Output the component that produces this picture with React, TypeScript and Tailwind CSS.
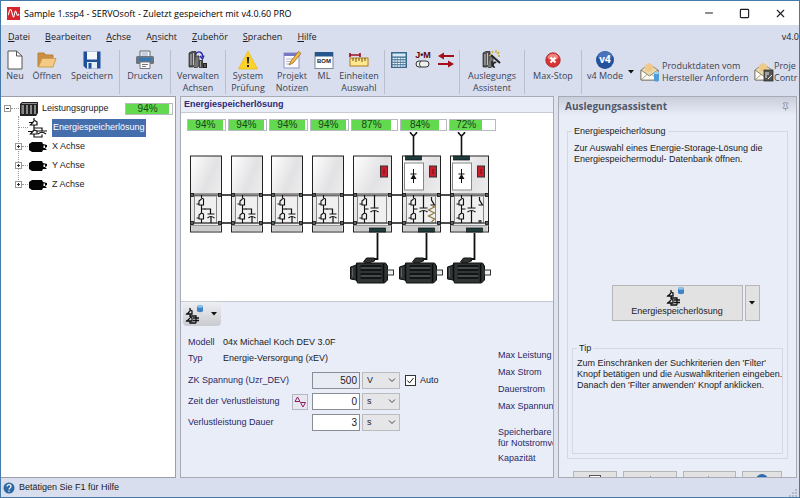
import type { ReactNode } from "react";
import clsx from "clsx";
import { Minus, Pin, Square, X } from "lucide-react";

const menu = [
  { key: "D", before: "", after: "atei" },
  { key: "B", before: "", after: "earbeiten" },
  { key: "A", before: "", after: "chse" },
  { key: "n", before: "A", after: "sicht" },
  { key: "Z", before: "", after: "ubehör" },
  { key: "S", before: "", after: "prachen" },
  { key: "H", before: "", after: "ilfe" },
];

const loads = [
  { value: 94, wide: false },
  { value: 94, wide: false },
  { value: 94, wide: false },
  { value: 94, wide: false },
  { value: 87, wide: true },
  { value: 84, wide: true },
  { value: 72, wide: true },
];

function LogoIcon() {
  return (
    <svg viewBox="0 0 13 13" className="size-[13px] shrink-0">
      <rect width="13" height="13" fill="#d8242c" />
      <path d="M1 8C2 8 2 2.5 3.5 2.5S5.5 10 6.5 10 7.5 4 8.5 4 9.5 8.5 10.5 8.5 11.5 7.5 12 7" fill="none" stroke="#fff" strokeWidth="1.1" />
    </svg>
  );
}

function NewIcon() {
  return (
    <svg viewBox="0 0 20 20" className="size-5">
      <path d="M3 1H11.5L17 6V19H3Z" fill="#fff" stroke="#555" />
      <path d="M11.5 1V6H17" fill="none" stroke="#555" />
    </svg>
  );
}

function OpenIcon() {
  return (
    <svg viewBox="0 0 20 20" className="size-5">
      <path d="M1 17V3H7L9 5H16V9" fill="#c98f45" stroke="#b98239" />
      <path d="M1.5 17L5 8.5H19L16 17Z" fill="#f3cb85" stroke="#cf9c52" />
    </svg>
  );
}

function SaveIcon() {
  return (
    <svg viewBox="0 0 20 20" className="size-5">
      <path d="M1.5 1.5H18.5V18.5H4L1.5 16Z" fill="#21509a" />
      <rect x="5" y="1.5" width="10" height="8" fill="#f4f7fc" />
      <rect x="5" y="12" width="10" height="6.5" fill="#e7edf8" />
      <rect x="6.5" y="13" width="3" height="5.5" fill="#21509a" />
    </svg>
  );
}

function PrintIcon() {
  return (
    <svg viewBox="0 0 20 20" className="size-5">
      <path d="M5 1H15V7H5Z" fill="#fff" stroke="#666" />
      <path d="M6.5 3H13M6.5 5H13" stroke="#8aa3c4" />
      <rect x="1" y="6" width="18" height="8" rx="1.5" fill="#687585" />
      <rect x="4" y="8" width="12" height="3" fill="#3576b5" />
      <path d="M5 12H15V18.5H5Z" fill="#fff" stroke="#777" />
      <path d="M7 14.5H13M7 16.5H11" stroke="#777" />
    </svg>
  );
}

function CabinetGlyph() {
  return (
    <>
      <path d="M1 3L4 1.5H8V15L5 17H1Z" fill="#555" stroke="#222" strokeWidth=".7" />
      <path d="M3 4V15M5.5 3V15" stroke="#ddd" strokeWidth=".8" />
      <path d="M8 6H11V16L9 17.5H6" fill="#777" stroke="#222" strokeWidth=".7" />
    </>
  );
}

function AxesIcon() {
  return (
    <svg viewBox="0 0 20 20" className="size-5">
      <CabinetGlyph />
      <rect x="11" y="10" width="4" height="8" fill="#444" />
      <rect x="15" y="13" width="4" height="5" fill="#222" />
      <path d="M12.5 11V17M17 14V17" stroke="#bbb" strokeWidth=".7" />
      <path d="M8 4C10 0 15 2 14.5 7M12 6L14.5 9L16 5.5" fill="none" stroke="#2425a8" strokeWidth="1.3" />
    </svg>
  );
}

function WarningIcon() {
  return (
    <svg viewBox="0 0 20 20" className="size-5">
      <path d="M10 1L19.5 19H.5Z" fill="#fbd32b" stroke="#e8b80c" strokeWidth=".7" />
      <path d="M8.8 7H11.2L10.7 13.5H9.3ZM9 15H11V17H9Z" fill="#222" />
    </svg>
  );
}

function NotesIcon() {
  return (
    <svg viewBox="0 0 20 20" className="size-5">
      <rect x="2" y="3" width="15" height="15" fill="#fafaff" stroke="#8f92c9" />
      <rect x="2" y="3" width="15" height="3" fill="#7679c4" />
      <path d="M4 9H11M4 11.5H9M4 14H8" stroke="#bbb" />
      <path d="M7 15L9 11L16.5 1.5L19 3.5L11 13Z" fill="#f0bb47" stroke="#9b6623" strokeWidth=".8" />
    </svg>
  );
}

function BomIcon() {
  return (
    <svg viewBox="0 0 20 20" className="size-5">
      <rect x="1" y="2.5" width="18" height="16" fill="#fff" stroke="#7d8798" />
      <rect x="1" y="2" width="18" height="4.5" fill="#27568f" />
      <text x="10" y="13" textAnchor="middle" fontSize="6" fontWeight="bold" fill="#222" fontFamily="Liberation Sans, sans-serif">BOM</text>
    </svg>
  );
}

function UnitsIcon() {
  return (
    <svg viewBox="0 0 20 20" className="size-5">
      <path d="M1 5H11M1 3V7M11 3V7" stroke="#9c1226" strokeWidth="1.7" />
      <rect x="1" y="8" width="18" height="8" fill="#ffe88d" stroke="#ab7c22" />
      <path d="M4 8V11M7 8V12M10 8V11M13 8V12M16 8V11" stroke="#6a4b10" />
    </svg>
  );
}

function CalculatorIcon() {
  return (
    <svg viewBox="0 0 18 18" className="size-[18px]">
      <rect x="1" y="1" width="16" height="16" fill="#39688f" />
      <rect x="2.5" y="2.5" width="13" height="3" fill="#d6e9f5" />
      {[7.5, 10, 12.5, 15].map((y) => (
        <path key={y} d={`M2.5 ${y}H15.5`} stroke="#e9f3fa" strokeWidth="1.5" strokeDasharray="2.2 .5" />
      ))}
    </svg>
  );
}

function MotorInertiaIcon() {
  return (
    <svg viewBox="0 0 20 20" className="size-5">
      <text x="10" y="8" textAnchor="middle" fontSize="9" fontWeight="bold" fill="#5c0712" fontFamily="Liberation Sans, sans-serif">J•M</text>
      <rect x="3" y="11" width="13" height="6" rx="3" fill="#eee" stroke="#333" />
      <path d="M8 11C6 13 6 15 8 17" fill="none" stroke="#333" />
    </svg>
  );
}

function ArrowsIcon() {
  return (
    <svg viewBox="0 0 18 18" className="size-[18px]">
      <path d="M5 5H17M1 13H13" stroke="#a50f1c" strokeWidth="1.8" />
      <path d="M1 5L7 1.5V8.5ZM17 13L11 9.5V16.5Z" fill="#a50f1c" />
    </svg>
  );
}

function WizardIcon() {
  return (
    <svg viewBox="0 0 20 20" className="size-5">
      <CabinetGlyph />
      <path d="M10 16V11M13 17C9 18 12 10 14 13" fill="none" stroke="#222" strokeWidth="1.5" />
      <path d="M9 5L18 13" stroke="#222" strokeWidth="2" />
      <path d="M10 1L11 3M14 0V3M17 2L15.5 4M18 6H16M7 6L9 5" stroke="#cda928" strokeWidth="1.3" />
    </svg>
  );
}

function StopIcon() {
  return (
    <svg viewBox="0 0 16 16" className="size-4">
      <circle cx="8" cy="8" r="7.2" fill="#d93434" stroke="#a51d1d" strokeWidth=".8" />
      <ellipse cx="8" cy="5" rx="5.3" ry="3.3" fill="#ee8580" />
      <path d="M5.5 5.5L10.5 10.5M10.5 5.5L5.5 10.5" stroke="#fff" strokeWidth="2" />
    </svg>
  );
}

function V4Icon() {
  return (
    <svg viewBox="0 0 20 20" className="size-5">
      <circle cx="10" cy="10" r="9" fill="#24509e" />
      <ellipse cx="10" cy="6" rx="7" ry="4.5" fill="#4873bb" />
      <text x="10" y="13" textAnchor="middle" fontSize="10" fontWeight="bold" fill="#fff" fontFamily="Open Sans, sans-serif">v4</text>
    </svg>
  );
}

function MailIcon({ device }: { device?: boolean }) {
  return (
    <svg viewBox="0 0 20 20" className="size-5 shrink-0">
      <path d="M1 8L9 2L18 8V18H1Z" fill="#ead9aa" stroke="#82745b" strokeWidth=".8" />
      <circle cx="9" cy="5.5" r="4.2" fill="#efc98c" />
      <path d="M1 8L9.5 14L18 8V18H1Z" fill="#fffdf1" stroke="#6f6b62" strokeWidth=".8" />
      <path d="M1 18L7 12.5M18 18L12 12.5" stroke="#8f8979" strokeWidth=".8" />
      {device ? (
        <>
          <rect x="10" y="8" width="9" height="11" fill="#555" stroke="#222" strokeWidth=".7" />
          <path d="M12 10V16M14 10V13M14 17L18 13" stroke="#eee" />
        </>
      ) : (
        <>
          <path d="M14 11V18C14 20 19 20 19 18V11Z" fill="#4d9cd6" />
          <ellipse cx="16.5" cy="11" rx="2.5" ry="1.3" fill="#9bd2f3" />
        </>
      )}
    </svg>
  );
}

function DropArrow() {
  return (
    <svg viewBox="0 0 6 4" className="h-1 w-1.5 shrink-0">
      <path d="M0 0H6L3 3.5Z" fill="#111" />
    </svg>
  );
}

function StorageIcon() {
  return (
    <svg viewBox="0 0 20 20" className="size-5 shrink-0">
      <path
        d="M6 0V2L9 4V7H6V10M6 3L2.5 7H6M1 4.5H4M6 10V12L9 13V16H6M6 12L2.5 16H6V19H14V16.5M0 13.5H4M6 10H14V13M9 13H19M10 16Q14 12.5 18 16"
        fill="none"
        stroke="#111"
        strokeWidth="1.2"
      />
    </svg>
  );
}

// smaller storage symbol with the database barrel above it
function StorageDbIcon() {
  return (
    <svg viewBox="0 0 22 20" className="h-5 w-[22px] shrink-0">
      <path
        d="M5 4V6L7 7V10H5V13M5 7L2 10H5M5 13L7 14V17H5M5 14L2 17H5V19H11M1 10H3M1 17H3M5 12H11V19M8 14H14M8 16.5H14"
        fill="none"
        stroke="#111"
        strokeWidth="1.3"
      />
      <path d="M12 2V7C12 8.5 18 8.5 18 7V2Z" fill="#3f83c7" />
      <ellipse cx="15" cy="2.2" rx="3" ry="1.5" fill="#8ec1ea" />
    </svg>
  );
}

function MotorIcon() {
  return (
    <svg viewBox="0 0 20 12" className="h-3 w-5 shrink-0">
      <path d="M1 3L4 1H14L15 3L19 4V6L17 7L19 9L15 9L14 11H4L1 9Z" fill="#050505" />
      <path d="M15.5 4.5H17V7H15.5Z" fill="#fff" />
    </svg>
  );
}

function GroupIcon() {
  return (
    <svg viewBox="0 0 20 16" className="h-4 w-5 shrink-0">
      <path d="M1 3L3 1H19V12L17 15H1Z" fill="#222" />
      <path d="M2.5 4H5V13H2.5ZM7 4H9V13H7ZM11 4H13V13H11ZM15 4H17V13H15Z" fill="#888" />
      <path d="M3 2.5H18" stroke="#aaa" strokeWidth=".8" />
    </svg>
  );
}

function LoadBar({ value, className }: { value: number; className?: string }) {
  return (
    <div className={clsx("h-3 shrink-0 border border-[#b9b9c1] bg-white", className)}>
      <div className="flex h-full items-center bg-[#62d94f]" style={{ width: `${value}%` }}>
        <span className="w-full text-center text-[10px] leading-none text-[#174416]">{value}%</span>
      </div>
    </div>
  );
}

function ToolButton({ icon, lines, className }: { icon: ReactNode; lines?: string[]; className: string }) {
  return (
    <button className={clsx("flex shrink-0 flex-col items-center whitespace-nowrap text-[#3c4254]", className)}>
      <span className="flex h-5 items-center">{icon}</span>
      {lines?.map((line) => (
        <span key={line} className="leading-3">{line}</span>
      ))}
    </button>
  );
}

function Separator() {
  return <div className="h-11 w-px shrink-0 bg-[#b9bfcd]" />;
}

function TreeToggle({ open }: { open?: boolean }) {
  return (
    <button aria-label={open ? "Zuklappen" : "Aufklappen"} className="relative z-10 size-[7px] shrink-0 bg-white">
      <svg viewBox="0 0 7 7" className="size-[7px]">
        <path d={open ? "M2 3.5H5" : "M2 3.5H5M3.5 2V5"} stroke="#333" />
        <rect x=".5" y=".5" width="6" height="6" fill="none" stroke="#999" />
      </svg>
    </button>
  );
}

function Transistors({ x }: { x: number }) {
  return (
    <g transform={`translate(${x} 64)`} fill="none" stroke="#111" strokeWidth="1.1">
      <path d="M5 0V3L7 4V10H5V15M5 4L2.5 6V10H5M0 9H3M5 15V18L7 19V24H5V28M5 18L2.5 20V24H5M0 23H3M5 14H9" />
    </g>
  );
}

function Cabinet({ x, width }: { x: number; width: number }) {
  return (
    <g>
      <rect x={x} y="25" width={width} height="76" fill="url(#metal)" stroke="#222" />
      <rect x={x + 1} y="95" width={width - 2} height="5" fill="#ccc" />
      <path d={`M${x} 62.5H${x + width}M${x} 94.5H${x + width}`} stroke="#999" />
      <rect x={x + 4} y="65" width={width - 9} height="27" fill="#f0f0f0" stroke="#888" />
      {[64, 92].map((y) => (
        <g key={y}>
          <path d={`M${x} ${y}H${x + width}`} stroke="#222" />
          <rect x={x} y={y - 1.5} width="3" height="3" fill="#526565" stroke="#111" strokeWidth=".8" />
          <rect x={x + width - 3} y={y - 1.5} width="3" height="3" fill="#526565" stroke="#111" strokeWidth=".8" />
        </g>
      ))}
      <Transistors x={x + 6} />
    </g>
  );
}

function Motor({ x }: { x: number }) {
  return (
    <g transform={`translate(${x} 127)`}>
      <path d="M29 -25V1H22" fill="none" stroke="#111" strokeWidth="1.8" />
      <path d="M15 4L18 0H26V3L20 5Z" fill="#303333" stroke="#111" />
      <path d="M2 9L8 7V5H37L39 8V22L36 25H9L8 22L2 21Z" fill="#303535" stroke="#111" />
      <path d="M8 6V23M12 8H33M12 12H33M12 16H33M12 20H33M35 6V24" stroke="#090b0b" strokeWidth="1.5" />
      <path d="M13 10H32M13 18H32M4 10V19" stroke="#69706d" strokeWidth=".8" />
      <rect x="39" y="12" width="6" height="5" fill="#eee" stroke="#333" />
    </g>
  );
}

function DriveDiagram() {
  return (
    <svg viewBox="0 0 312 160" className="h-40 w-[312px]" role="img" aria-label="Antriebssystem">
      <defs>
        <linearGradient id="metal" x1="0" y1="0" x2="1" y2="1">
          <stop offset="0" stopColor="#fff" />
          <stop offset=".45" stopColor="#e2e2e4" />
          <stop offset="1" stopColor="#f7f7f7" />
        </linearGradient>
      </defs>
      <path d="M4 64H301M4 92H301" stroke="#111" strokeWidth="1.7" />
      {[3.5, 44.5, 84.5, 125.5].map((x) => (
        <g key={x}>
          <Cabinet x={x} width={31} />
          <path d={`M${x + 14} 78H${x + 20}V83M${x + 17} 83H${x + 24}M${x + 17} 87Q${x + 20} 84 ${x + 24} 87M${x + 20.5} 86V92`} fill="none" stroke="#111" strokeWidth="1.2" />
        </g>
      ))}
      {[166.5, 215.5, 263.5].map((x, i) => (
        <g key={x}>
          <Cabinet x={x} width={38} />
          <path d={`M${x + 21} 64V77M${x + 17} 77H${x + 25}M${x + 17} 81Q${x + 21} 78 ${x + 25} 81M${x + 21} 80V92`} fill="none" stroke="#111" strokeWidth="1.2" />
          <rect x={x + 27} y="35" width="7" height="11" fill="#c91f2c" stroke="#333" />
          <path d={`M${x + 30.5} 38V43`} stroke="#6e0e16" />
          <rect x={x + 16} y="97" width="16" height="4" fill="#203c3c" stroke="#111" strokeWidth=".7" />
          <Motor x={x - 5} />
          {i > 0 && (
            <>
              <rect x={x + 2} y="32" width="19" height="27" fill="#fff" stroke="#888" />
              <rect x={x + 3} y="25" width="16" height="4" fill="#203c3c" stroke="#111" strokeWidth=".7" />
              <path d={`M${x + 11} 25V5M${x + 8} 1V2L${x + 11} 5L${x + 14} 2V1`} fill="none" stroke="#111" strokeWidth="1.6" />
              <path d={`M${x + 11} 38V52M${x + 8} 43H${x + 14}`} stroke="#111" />
              <path d={`M${x + 11} 43L${x + 14} 48H${x + 8}Z`} fill="#111" />
              <path d={`M${x + 29} 66V69L${x + 32} 74H${x + 28}`} fill="none" stroke="#111" strokeWidth="1.2" />
            </>
          )}
          {i === 1 && (
            <path d={`M${x + 29} 74L${x + 32} 76L${x + 26} 79L${x + 32} 82L${x + 26} 85L${x + 32} 88L${x + 29} 91`} fill="none" stroke="#8f7c4d" strokeWidth="1.3" />
          )}
          {i === 2 && <rect x={x + 28} y="89" width="3" height="3" fill="#444" />}
        </g>
      ))}
    </svg>
  );
}

function UnitSelect({ unit, label }: { unit: string; label: string }) {
  return (
    <div className="relative">
      <select aria-label={label} className="block h-[17px] w-[38px] appearance-none border border-[#b9bbbf] bg-[#e6e6e8] pl-1 leading-none text-[#222]">
        <option>{unit}</option>
      </select>
      <svg viewBox="0 0 8 5" className="pointer-events-none absolute right-1 top-1.5 h-[5px] w-2">
        <path d="M1 .5L4 3.5L7 .5" fill="none" stroke="#444" />
      </svg>
    </div>
  );
}

type ValueRowProps = {
  id: string;
  label: string;
  value: string;
  unit: string;
  readOnly?: boolean;
  action?: ReactNode;
  children?: ReactNode;
};

function ValueRow({ id, label, value, unit, readOnly, action, children }: ValueRowProps) {
  return (
    <div className="flex h-[17px] items-center">
      <label htmlFor={id} className="w-[104px] shrink-0 whitespace-nowrap text-[#2a2868]">{label}</label>
      <div className="flex w-5 shrink-0">{action}</div>
      <input
        id={id}
        defaultValue={value}
        readOnly={readOnly}
        className="h-[17px] w-12 border border-[#8a8d94] bg-white px-0.5 text-right text-[10px] read-only:bg-[#e8ebf4]"
      />
      <div className="ml-0.5">
        <UnitSelect unit={unit} label={`Einheit ${label}`} />
      </div>
      {children}
    </div>
  );
}

export default function App() {
  return (
    <div className="flex h-screen flex-col overflow-hidden border border-[#4479aa] bg-[#d8deed] font-['Liberation_Sans',sans-serif] text-[9px] leading-[11px] text-[#1b1b24]">
      <header className="flex h-6 shrink-0 items-center bg-white pl-1.5 font-['Open_Sans',sans-serif]">
        <LogoIcon />
        <h1 className="ml-1 flex-1 text-black">Sample 1.ssp4 - SERVOsoft - Zuletzt gespeichert mit v4.0.60 PRO</h1>
        <div className="flex gap-6 pr-3">
          <button aria-label="Minimieren"><Minus size={12} strokeWidth={2} /></button>
          <button aria-label="Maximieren"><Square size={11} strokeWidth={2.5} /></button>
          <button aria-label="Schließen"><X size={13} strokeWidth={2} /></button>
        </div>
      </header>

      <nav className="flex h-[23px] shrink-0 items-center gap-[15px] overflow-hidden pl-[7px] font-['Open_Sans',sans-serif]">
        {menu.map((item) => (
          <button key={item.key} className="shrink-0">
            {item.before}<span className="underline">{item.key}</span>{item.after}
          </button>
        ))}
        <span className="ml-auto whitespace-nowrap">v4.0</span>
      </nav>

      <div className="flex h-12 shrink-0 overflow-hidden pt-0.5 font-['Open_Sans',sans-serif]">
        <ToolButton icon={<NewIcon />} lines={["Neu"]} className="w-7" />
        <ToolButton icon={<OpenIcon />} lines={["Öffnen"]} className="w-9" />
        <ToolButton icon={<SaveIcon />} lines={["Speichern"]} className="w-[54px]" />
        <Separator />
        <ToolButton icon={<PrintIcon />} lines={["Drucken"]} className="w-[50px]" />
        <Separator />
        <ToolButton icon={<AxesIcon />} lines={["Verwalten", "Achsen"]} className="w-[54px]" />
        <Separator />
        <ToolButton icon={<WarningIcon />} lines={["System", "Prüfung"]} className="w-11" />
        <ToolButton icon={<NotesIcon />} lines={["Projekt", "Notizen"]} className="w-11" />
        <ToolButton icon={<BomIcon />} lines={["ML"]} className="w-5" />
        <ToolButton icon={<UnitsIcon />} lines={["Einheiten", "Auswahl"]} className="w-[50px]" />
        <Separator />
        <ToolButton icon={<CalculatorIcon />} className="w-7" />
        <ToolButton icon={<MotorInertiaIcon />} className="w-5" />
        <ToolButton icon={<ArrowsIcon />} className="w-[26px]" />
        <Separator />
        <ToolButton icon={<WizardIcon />} lines={["Auslegungs", "Assistent"]} className="w-16" />
        <Separator />
        <ToolButton icon={<StopIcon />} lines={["Max-Stop"]} className="w-14" />
        <Separator />
        <ToolButton icon={<V4Icon />} lines={["v4 Mode"]} className="w-[46px]" />
        <button aria-label="Modus wählen" className="flex h-11 w-3 shrink-0 items-center"><DropArrow /></button>
        <button className="flex h-11 w-[114px] shrink-0 items-center gap-0.5 text-left leading-3 text-[#3c4254]">
          <MailIcon />
          <span className="whitespace-nowrap">Produktdaten vom<br />Hersteller Anfordern</span>
        </button>
        <button className="flex h-11 shrink-0 items-center text-left leading-3 text-[#3c4254]">
          <MailIcon device />
          <span className="whitespace-nowrap">Proje<br />Contr</span>
        </button>
      </div>

      <main className="flex min-h-0 flex-1 gap-1 bg-[#dfe3ee]">
        <aside className="relative w-[175px] shrink-0 border border-l-0 border-[#9b9fab] bg-white pt-0.5">
          <div className="absolute left-[17px] top-[19px] h-[70px] border-l border-dotted border-[#999]" />
          <div className="flex h-[19px] items-center pl-[3px]">
            <TreeToggle open />
            <span className="w-2 border-t border-dotted border-[#999]" />
            <GroupIcon />
            <span className="ml-[3px] flex-1">Leistungsgruppe</span>
            <LoadBar value={94} className="mr-0.5 w-12" />
          </div>
          <div className="flex h-[19px] items-center pl-[17px]">
            <span className="w-2.5 border-t border-dotted border-[#999]" />
            <StorageIcon />
            <span className="ml-1 flex h-[18px] items-center bg-[#456ead] px-px text-white">Energiespeicherlösung</span>
          </div>
          {["X Achse", "Y Achse", "Z Achse"].map((axis) => (
            <div key={axis} className="flex h-[19px] items-center pl-3.5">
              <TreeToggle />
              <span className="w-1.5 border-t border-dotted border-[#999]" />
              <MotorIcon />
              <span className="ml-1">{axis}</span>
            </div>
          ))}
        </aside>

        <section className="flex min-w-0 flex-1 flex-col border border-[#a8abb5] bg-[#e9edf7]">
          <h2 className="flex h-[15px] shrink-0 items-center pl-[3px] font-bold text-[#2e2a78]">Energiespeicherlösung</h2>
          <div className="h-[190px] shrink-0 overflow-hidden border-y border-[#c6cad4] bg-white pl-1.5 pt-1.5">
            <div className="flex gap-0.5">
              {loads.map((load, i) => (
                <LoadBar key={i} value={load.value} className={load.wide ? "w-[47px]" : "w-[39px]"} />
              ))}
            </div>
            <DriveDiagram />
          </div>
          <div className="flex min-h-0 flex-1 overflow-hidden">
            <div className="w-[311px] shrink-0 pl-0.5">
              <button aria-label="Energiespeicher wählen" className="flex h-6 w-[38px] items-center gap-1 rounded-b bg-linear-to-b from-[#eeeff3] to-[#c9cbd0] pl-0.5">
                <StorageDbIcon />
                <DropArrow />
              </button>
              <dl className="mt-2 grid grid-cols-[35px_1fr] pl-[5px] leading-4">
                <dt className="text-[#2a2868]">Modell</dt>
                <dd>04x Michael Koch DEV 3.0F</dd>
                <dt className="text-[#2a2868]">Typ</dt>
                <dd>Energie-Versorgung (xEV)</dd>
              </dl>
              <div className="mt-1.5 flex flex-col gap-1 pl-[5px]">
                <ValueRow id="spannung" label="ZK Spannung (Uzr_DEV)" value="500" unit="V" readOnly>
                  <label className="ml-[5px] flex items-center gap-1 whitespace-nowrap">
                    <span className="relative size-[11px]">
                      <input type="checkbox" defaultChecked className="peer block size-[11px] appearance-none border border-[#333] bg-white" />
                      <svg viewBox="0 0 11 11" className="pointer-events-none absolute inset-0 hidden size-[11px] peer-checked:block">
                        <path d="M2.5 5.5L4.5 8L8.5 3" fill="none" stroke="#222" />
                      </svg>
                    </span>
                    Auto
                  </label>
                </ValueRow>
                <ValueRow
                  id="zeit"
                  label="Zeit der Verlustleistung"
                  value="0"
                  unit="s"
                  action={
                    <button aria-label="Verlauf" className="size-4 border border-[#b5b6c4] bg-[#e7e7ed]">
                      <svg viewBox="0 0 14 14" className="size-3.5">
                        <path d="M2 6.5L4.5 2L7 6.5ZM7.5 7.5H12.5L10 12Z" fill="none" stroke="#8b1c68" />
                      </svg>
                    </button>
                  }
                />
                <ValueRow id="dauer" label="Verlustleistung Dauer" value="3" unit="s" />
              </div>
            </div>
            <div className="flex min-w-0 flex-1 flex-col overflow-hidden whitespace-nowrap pl-1.5 pt-[45px] text-[#2a2868]">
              <p className="leading-[17px]">Max Leistung</p>
              <p className="leading-[17px]">Max Strom</p>
              <p className="leading-[17px]">Dauerstrom</p>
              <p className="leading-[17px]">Max Spannun</p>
              <p className="mt-3">Speicherbare<br />für Notstromve</p>
              <p className="mt-1">Kapazität</p>
            </div>
          </div>
        </section>

        <aside className="mr-0.5 flex w-[239px] shrink-0 flex-col overflow-hidden border border-[#a8abb5] bg-[#e9edf7]">
          <div className="flex h-[19px] shrink-0 items-center justify-between bg-linear-to-b from-[#c9cedc] to-[#e9edf7] px-1.5 font-['Open_Sans',sans-serif] text-[10px] text-[#51586c]">
            <h2 className="font-bold">Auslegungsassistent</h2>
            <button aria-label="Anheften"><Pin size={9} color="#7b88a3" /></button>
          </div>
          <fieldset className="mx-2 mt-2.5 min-w-0 shrink-0 border border-[#d3d8e4] px-1 pb-1">
            <legend className="px-0.5">Energiespeicherlösung</legend>
            <p className="mt-1.5 whitespace-nowrap pl-0.5">Zur Auswahl eines Energie-Storage-Lösung die<br />Energiespeichermodul- Datenbank öffnen.</p>
            <div className="mt-[120px] flex justify-center gap-0.5 pl-4">
              <button className="flex h-9 w-[131px] flex-col items-center border border-[#b5b6b5] bg-[#e2e2e2]">
                <StorageDbIcon />
                <span>Energiespeicherlösung</span>
              </button>
              <button aria-label="Auswahl öffnen" className="flex h-9 w-[15px] items-center justify-center border border-[#b5b6b5] bg-[#e2e2e2]"><DropArrow /></button>
            </div>
            <fieldset className="mt-[22px] h-[111px] min-w-0 border border-[#d3d8e4] px-1">
              <legend className="px-0.5">Tip</legend>
              <p className="mt-1 whitespace-nowrap">Zum Einschränken der Suchkriterien den 'Filter'<br />Knopf betätigen und die Auswahlkriterien eingeben.<br />Danach den 'Filter anwenden' Knopf anklicken.</p>
            </fieldset>
          </fieldset>
          <div className="mt-3 flex shrink-0 gap-1.5 px-3.5">
            <button aria-label="Ansicht" className="flex h-6 w-11 justify-center border border-[#b5b6b5] bg-[#e2e2e2] pt-[3px]"><span className="size-3 border border-[#555] bg-white" /></button>
            <button aria-label="Zurück" className="flex h-6 flex-1 justify-center border border-[#b5b6b5] bg-[#e2e2e2] pt-1"><svg viewBox="0 0 10 10" className="size-2.5"><path d="M6 0V10L1 5Z" fill="#345" /></svg></button>
            <button aria-label="Weiter" className="flex h-6 flex-1 justify-center border border-[#b5b6b5] bg-[#e2e2e2] pt-1"><svg viewBox="0 0 10 10" className="size-2.5"><path d="M4 0V10L9 5Z" fill="#345" /></svg></button>
            <button aria-label="Hilfe" className="flex h-6 w-10 justify-center border border-[#b5b6b5] bg-[#e2e2e2] pt-0.5"><span className="size-3 rounded-full bg-[#2b6cb0]" /></button>
          </div>
        </aside>
      </main>

      <footer className="flex h-[19px] shrink-0 items-center gap-1 pl-0.5">
        <svg viewBox="0 0 12 12" className="size-3">
          <circle cx="6" cy="6" r="5.5" fill="#2c68a3" />
          <path d="M4 4.5C4 2 8 2 8 4.5C8 6 6 5.8 6 7.5M6 8.5V9.7" fill="none" stroke="#fff" strokeWidth="1.2" />
        </svg>
        <p className="flex-1">Betätigen Sie F1 für Hilfe</p>
        <svg viewBox="0 0 8 8" className="mr-0.5 size-2 self-end">
          <path d="M6 0H8V2H6ZM3 3H5V5H3ZM6 3H8V5H6ZM0 6H2V8H0ZM3 6H5V8H3ZM6 6H8V8H6Z" fill="#b3bac9" />
        </svg>
      </footer>
    </div>
  );
}
